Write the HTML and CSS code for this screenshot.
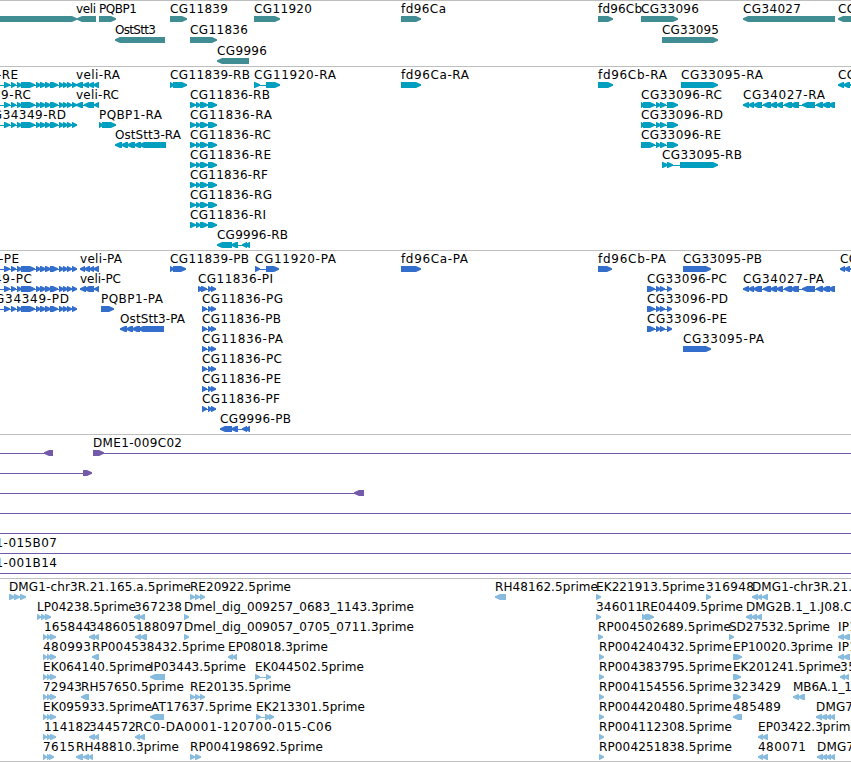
FILE: index.html
```
<!DOCTYPE html>
<html lang="en">
<head>
    <meta charset="UTF-8">
    <title>Genome Browser</title>
    <link rel="stylesheet" href="styles.css">
</head>
<body>

<div class="browser">
    <svg class="track genes" id="genes"></svg>
    <svg class="track transcripts" id="transcripts"></svg>
    <svg class="track proteins" id="proteins"></svg>
    <svg class="track clones" id="clones"></svg>
    <svg class="track ests" id="ests"></svg>
</div>

<script>
    const SVG = "http://www.w3.org/2000/svg";

    // exon blocks shared by several transcripts
    const cg34349 = [[-10, -4], [4, 10], [11, 16], [17, 22], [21, 35], [36, 41], [40, 46], [45, 51], [50, 58], [59, 64], [63, 68], [67, 72], [72, 77]];
    const cg11836 = [[190, 196], [196, 201], [200, 208], [208, 217]];
    const cg11836p = [[202, 207], [208, 212], [211, 216]];
    const cg33096 = [[641, 644], [643, 655], [656, 661], [660, 666], [667, 678]];
    const cg33096p = [[647, 655], [656, 661], [660, 665], [667, 672]];
    const cg34027 = [[743, 749], [748, 754], [753, 762], [763, 771], [770, 777], [776, 783], [784, 792], [790, 799], [802, 815], [816, 823], [822, 830], [828, 835]];
    const est43 = [[43, 47], [47, 51], [50, 56]];
    const est190 = [[190, 195], [195, 200], [200, 205]];

    // [lane, label, label start, label end, strand, blocks]
    const genes = [
        [0, "", 0, 0, "+", [[-10, 77]]],
        [0, "veli", 76, 95, "-", [[77, 96]]],
        [0, "PQBP1", 99, 136, "+", [[99, 116]]],
        [0, "CG11839", 170, 227, "+", [[170, 187]]],
        [0, "CG11920", 254, 311, "+", [[254, 280]]],
        [0, "fd96Ca", 401, 445, "+", [[401, 421]]],
        [0, "fd96Cb", 598, 641, "+", [[598, 613]]],
        [0, "CG33096", 641, 698, "+", [[641, 678]]],
        [0, "CG34027", 743, 800, "-", [[743, 835]]],
        [0, "CG", 838, 855, "-", [[838, 870]]],
        [1, "OstStt3", 115, 155, "-", [[115, 165]]],
        [1, "CG11836", 190, 247, "+", [[190, 217]]],
        [1, "CG33095", 662, 718, "+", [[662, 718]]],
        [2, "CG9996", 217, 266, "-", [[217, 249]]]
    ];

    const transcripts = [
        [0, "CG34349-RE", -62, 17, "+", cg34349],
        [0, "veli-RA", 76, 119, "-", [[76, 83], [83, 89], [88, 94], [93, 99]]],
        [0, "CG11839-RB", 170, 249, "+", [[170, 174], [173, 187]]],
        [0, "CG11920-RA", 254, 335, "+", [[254, 260], [266, 280]]],
        [0, "fd96Ca-RA", 401, 468, "+", [[401, 421]]],
        [0, "fd96Cb-RA", 598, 666, "+", [[598, 613]]],
        [0, "CG33095-RA", 681, 762, "+", [[681, 718]]],
        [0, "CG", 838, 855, "-", [[838, 844], [843, 850], [850, 870]]],
        [1, "CG34349-RC", -51, 30, "+", cg34349],
        [1, "veli-RC", 76, 118, "-", [[76, 83], [84, 94], [94, 99]]],
        [1, "CG11836-RB", 190, 269, "+", cg11836],
        [1, "CG33096-RC", 641, 721, "+", cg33096],
        [1, "CG34027-RA", 743, 824, "-", cg34027],
        [2, "CG34349-RD", -16, 65, "+", cg34349],
        [2, "PQBP1-RA", 99, 161, "+", [[99, 103], [102, 116]]],
        [2, "CG11836-RA", 190, 271, "+", cg11836],
        [2, "CG33096-RD", 641, 722, "+", cg33096],
        [3, "OstStt3-RA", 115, 180, "-", [[115, 122], [121, 128], [127, 135], [134, 141], [139, 166]]],
        [3, "CG11836-RC", 190, 270, "+", cg11836],
        [3, "CG33096-RE", 641, 720, "+", [[641, 655], [656, 661], [660, 666], [667, 678]]],
        [4, "CG11836-RE", 190, 270, "+", cg11836],
        [4, "CG33095-RB", 662, 741, "+", [[662, 668], [667, 673], [680, 718]]],
        [5, "CG11836-RF", 190, 267, "+", cg11836],
        [6, "CG11836-RG", 190, 271, "+", cg11836],
        [7, "CG11836-RI", 190, 265, "+", cg11836],
        [8, "CG9996-RB", 217, 287, "-", [[217, 232], [231, 238], [242, 247], [245, 250]]]
    ];

    const proteins = [
        [0, "CG34349-PE", -60, 18, "+", cg34349],
        [0, "veli-PA", 80, 121, "-", [[80, 85], [84, 90], [89, 94], [93, 99]]],
        [0, "CG11839-PB", 170, 248, "+", [[170, 174], [173, 186]]],
        [0, "CG11920-PA", 255, 335, "+", [[255, 260], [266, 279]]],
        [0, "fd96Ca-PA", 401, 467, "+", [[401, 421]]],
        [0, "fd96Cb-PA", 598, 665, "+", [[598, 612]]],
        [0, "CG33095-PB", 683, 761, "+", [[683, 711]]],
        [0, "CG", 840, 857, "-", [[840, 845], [844, 850], [850, 870]]],
        [1, "CG34349-PC", -50, 31, "+", cg34349],
        [1, "veli-PC", 80, 120, "-", [[80, 86], [84, 94], [94, 99]]],
        [1, "CG11836-PI", 198, 272, "+", [[198, 203], [201, 207], [208, 212], [211, 216]]],
        [1, "CG33096-PC", 647, 726, "+", cg33096p],
        [1, "CG34027-PA", 743, 823, "-", cg34027],
        [2, "CG34349-PD", -14, 68, "+", cg34349],
        [2, "PQBP1-PA", 101, 162, "+", [[101, 114]]],
        [2, "CG11836-PG", 202, 282, "+", cg11836p],
        [2, "CG33096-PD", 647, 727, "+", cg33096p],
        [3, "OstStt3-PA", 120, 184, "-", [[120, 127], [126, 133], [132, 140], [138, 164]]],
        [3, "CG11836-PB", 202, 280, "+", cg11836p],
        [3, "CG33096-PE", 647, 726, "+", cg33096p],
        [4, "CG11836-PA", 202, 282, "+", cg11836p],
        [4, "CG33095-PA", 683, 763, "+", [[683, 711]]],
        [5, "CG11836-PC", 202, 281, "+", cg11836p],
        [6, "CG11836-PE", 202, 280, "+", cg11836p],
        [7, "CG11836-PF", 202, 279, "+", cg11836p],
        [8, "CG9996-PB", 220, 290, "-", [[220, 232], [231, 238], [242, 247], [245, 250]]]
    ];

    const clones = [
        [0, "", 0, 0, "-", [[-20, -10], [44, 53]]],
        [0, "DME1-009C02", 93, 181, "+", [[93, 104], [870, 880]]],
        [1, "", 0, 0, "+", [[-20, -10], [83, 92]]],
        [2, "", 0, 0, "-", [[-20, -10], [354, 364]]],
        [3, "", 0, 0, "+", [[-20, -10], [870, 880]]],
        [4, "", 0, 0, "+", [[-20, -10], [870, 880]]],
        [5, "DME1-015B07", -33, 56, "+", [[-20, -10], [870, 880]]],
        [6, "DME1-001B14", -33, 56, "+", [[-20, -10], [870, 880]]]
    ];

    const ests = [
        [0, "DMG1-chr3R.21.165.a.5prime", 9, 190, "+", [[9, 15], [14, 20], [20, 26]]],
        [0, "RE20922.5prime", 190, 290, "+", est190],
        [0, "RH48162.5prime", 495, 597, "-", [[495, 506]]],
        [0, "EK221913.5prime", 596, 704, "+", [[596, 601]]],
        [0, "316948", 706, 753, "+", [[706, 711]]],
        [0, "DMG1-chr3R.21.", 752, 851, "-", [[752, 758], [757, 762], [762, 768]]],
        [1, "LP04238.5prime", 37, 135, "+", [[37, 41], [41, 46], [45, 51]]],
        [1, "367238", 134, 181, "-", [[134, 140], [139, 145]]],
        [1, "Dmel_dig_009257_0683_1143.3prime", 184, 413, "+", [[184, 189]]],
        [1, "346011", 596, 642, "+", [[596, 601]]],
        [1, "RE04409.5prime", 642, 742, "+", [[642, 647], [645, 654]]],
        [1, "DMG2B.1_1.J08.C", 746, 851, "-", [[746, 752], [751, 757], [756, 762]]],
        [2, "165844", 44, 90, "+", est43],
        [2, "348605", 89, 135, "-", [[89, 95], [94, 99]]],
        [2, "188097", 136, 182, "-", [[135, 141], [140, 147]]],
        [2, "Dmel_dig_009057_0705_0711.3prime", 184, 413, "+", [[184, 189]]],
        [2, "RP004502689.5prime", 598, 730, "+", [[598, 603]]],
        [2, "SD27532.5prime", 729, 829, "+", [[729, 734]]],
        [2, "IP1", 838, 856, "-", [[838, 844], [843, 850]]],
        [3, "480993", 43, 90, "+", est43],
        [3, "RP004538432.5prime", 92, 224, "-", [[92, 99]]],
        [3, "EP08018.3prime", 228, 327, "-", [[228, 233], [232, 237]]],
        [3, "RP004240432.5prime", 599, 731, "+", [[599, 604]]],
        [3, "EP10020.3prime", 733, 832, "+", [[733, 742]]],
        [3, "IP1", 838, 856, "-", [[838, 844], [843, 850]]],
        [4, "EK064140.5prime", 43, 151, "+", est43],
        [4, "IP03443.5prime", 150, 245, "-", [[150, 165]]],
        [4, "EK044502.5prime", 255, 363, "+", [[255, 260], [266, 271]]],
        [4, "RP004383795.5prime", 599, 731, "+", [[599, 604]]],
        [4, "EK201241.5prime", 733, 840, "+", [[733, 741]]],
        [4, "35", 840, 855, "-", [[840, 845], [844, 849]]],
        [5, "72943", 43, 81, "+", est43],
        [5, "RH57650.5prime", 81, 183, "-", [[81, 89]]],
        [5, "RE20135.5prime", 190, 290, "+", est190],
        [5, "RP004154556.5prime", 599, 731, "+", [[599, 604]]],
        [5, "323429", 733, 780, "+", [[733, 741]]],
        [5, "MB6A.1_1", 793, 851, "-", [[793, 799], [798, 805]]],
        [6, "EK095933.5prime", 43, 151, "+", est43],
        [6, "AT17637.5prime", 151, 251, "-", [[150, 164]]],
        [6, "EK213301.5prime", 256, 364, "+", [[256, 261], [265, 271], [269, 274]]],
        [6, "RP004420480.5prime", 599, 731, "+", [[599, 604]]],
        [6, "485489", 733, 780, "-", [[733, 742]]],
        [6, "DMG7", 816, 852, "-", [[816, 822], [821, 827], [826, 831], [830, 835]]],
        [7, "114182", 44, 90, "+", est43],
        [7, "344572", 89, 135, "-", [[89, 95], [94, 99]]],
        [7, "RC0-DA0001-120700-015-C06", 135, 331, "-", [[135, 140], [139, 145]]],
        [7, "RP004112308.5prime", 599, 731, "+", [[599, 604]]],
        [7, "EP03422.3prime", 758, 857, "-", [[758, 763], [762, 768]]],
        [8, "7615", 43, 74, "+", [[43, 47], [47, 51], [49, 54]]],
        [8, "RH48810.3prime", 76, 178, "-", [[76, 83], [83, 89], [88, 93]]],
        [8, "RP004198692.5prime", 190, 322, "+", [[190, 195], [195, 201]]],
        [8, "RP004251838.5prime", 599, 731, "+", [[599, 604]]],
        [8, "480071", 758, 805, "-", [[758, 763], [762, 768]]],
        [8, "DMG7", 817, 853, "-", [[817, 823], [822, 827], [826, 831], [830, 835]]]
    ];

    function add(svg, name, attrs) {
        let el = document.createElementNS(SVG, name);
        for (let key in attrs) {
            el.setAttribute(key, attrs[key]);
        }
        svg.appendChild(el);
        return el;
    }

    // block with a blunt point in the direction of the strand
    function arrowPoints(start, end, strand, top) {
        let head = Math.min(end - start - 0.5, 5);
        let tail = start;
        let neck = end - head;
        let tip = end;
        if (strand === "-") {
            tail = end;
            neck = start + head;
            tip = start;
        }
        return [tail + "," + top, neck + "," + top, tip + "," + (top + 2.2), tip + "," + (top + 3.8),
            neck + "," + (top + 6), tail + "," + (top + 6)].join(" ");
    }

    function drawTrack(id, features, laneHeight) {
        let svg = document.getElementById(id);
        features.forEach(function(f) {
            let y = f[0] * laneHeight;
            let blocks = f[5];
            if (blocks.length > 1) {
                add(svg, "line", { "class": "intron", x1: blocks[0][0], x2: blocks[blocks.length - 1][1], y1: y + 18.5, y2: y + 18.5 });
            }
            blocks.forEach(function(b) {
                add(svg, "polygon", { "class": "exon", points: arrowPoints(b[0], b[1], f[4], y + 15) });
            });
            if (f[1]) {
                let label = add(svg, "text", { x: f[2], y: y + 12, textLength: f[3] - f[2] + 1 });
                label.textContent = f[1];
            }
        });
    }

    drawTrack("genes", genes, 21);
    drawTrack("transcripts", transcripts, 20);
    drawTrack("proteins", proteins, 20);
    drawTrack("clones", clones, 20);
    drawTrack("ests", ests, 20);
</script>

</body>
</html>
```
FILE: styles.css
```
body {
    margin: 0;
    background-color: #ffffff;
    overflow: hidden;
}
.browser {
    width: 851px;
    border-bottom: 1px solid #bebebe;
}
.track {
    display: block;
    box-sizing: border-box;
    width: 100%;
    border-top: 1px solid #bebebe;
    overflow: hidden;
}
.track text {
    font-family: "DejaVu Sans", sans-serif;
    font-size: 12px;
    fill: #000000;
}
.genes {
    height: 66px;
    color: #408d94;
}
.transcripts {
    height: 184px;
    color: #009fc0;
}
.proteins {
    height: 184px;
    color: #336ecc;
}
.clones {
    height: 144px;
    color: #7259a9;
}
.ests {
    height: 183px;
    color: #87bcde;
}
.exon {
    fill: currentColor;
}
.intron {
    stroke: currentColor;
    stroke-width: 1;
    shape-rendering: crispEdges;
}
```
